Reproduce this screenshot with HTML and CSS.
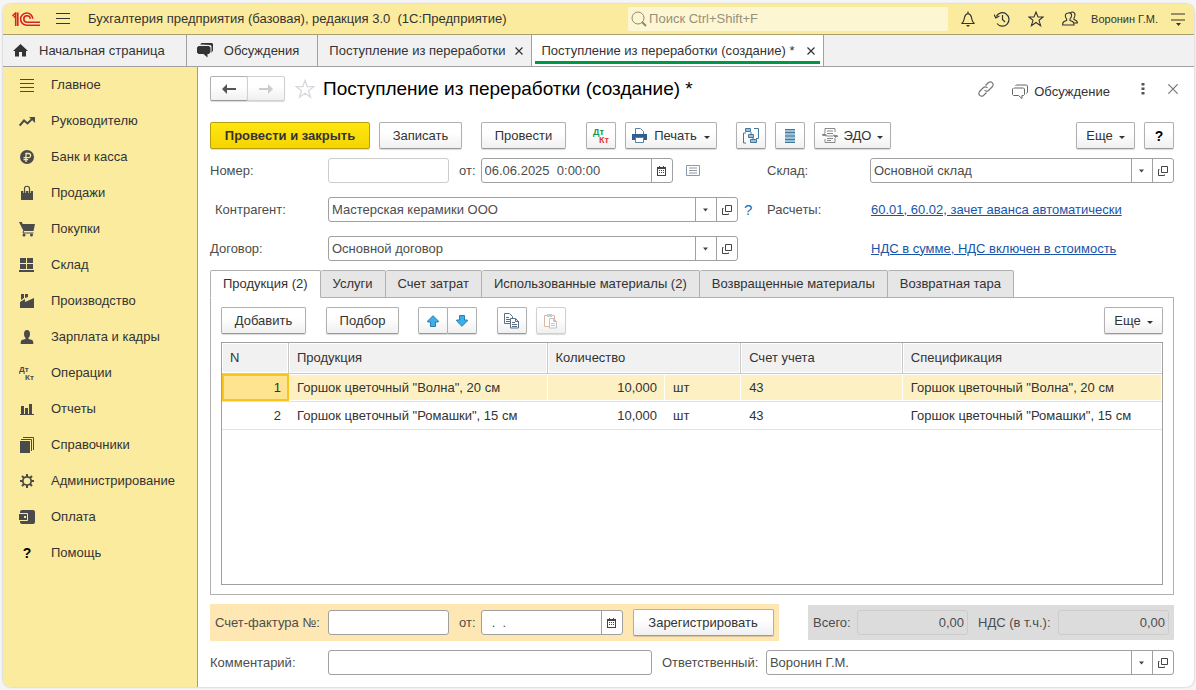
FILE: index.html
```html
<!DOCTYPE html>
<html lang="ru">
<head>
    <meta charset="UTF-8">
    <meta name="viewport" content="width=device-width, initial-scale=1.0">
    <title>Поступление из переработки (создание)</title>
    <link rel="stylesheet" href="styles.css">
</head>
<body>
    <!-- Shared icons -->
    <svg class="sprite" aria-hidden="true">
        <symbol id="i-close" viewBox="0 0 8 8"><path d="M.5.5l7 7M7.5.5l-7 7" fill="none" stroke="currentColor" stroke-width="1.2"/></symbol>
        <symbol id="i-caret" viewBox="0 0 6 3"><path d="M0 0h6L3 3z" fill="currentColor"/></symbol>
        <symbol id="i-open" viewBox="0 0 10 10"><path d="M3.5.5h6v6h-6zM1.5 3.5h-1v6h6v-1" fill="none" stroke="#444"/></symbol>
        <symbol id="i-calendar" viewBox="0 0 9 10"><path d="M0 1h2V0h1v1h3V0h1v1h2v9H0zM1 3v6h7V3z" fill="#444" fill-rule="evenodd"/><path d="M2 4h1v1H2zM4 4h1v1H4zM6 4h1v1H6zM2 6h1v1H2zM4 6h1v1H4zM6 6h1v1H6z" fill="#444"/></symbol>
    </svg>

    <div class="app">
        <!-- Title bar -->
        <header class="titlebar">
            <svg class="logo" width="28" height="15" viewBox="0 0 28 15" fill="none" stroke="#d8232a" stroke-width="1.6">
                <path d="M.4 4L3.700 1V14M1.800 5.400L3 4.300M5.800.6V14"/>
                <path d="M20.8 6.8A6.100 6.100 0 1 0 15 13.2H28M18.200 6.800A3.200 3.200 0 1 0 15 10.200H28"/>
            </svg>
            <button class="icon-btn menu-btn" aria-label="Меню"><svg width="14" height="12" viewBox="0 0 14 12"><path d="M0 .5h14M0 5.5h14M0 10.5h14" stroke="#333"/></svg></button>
            <span class="app-name">Бухгалтерия предприятия (базовая), редакция 3.0&nbsp; (1С:Предприятие)</span>
            <label class="search">
                <svg width="16" height="16" viewBox="0 0 16 16" fill="none" stroke="#8f8a6c"><circle cx="7" cy="7" r="6"/><path d="M11 11l4 4" stroke-width="2"/></svg>
                <input type="text" placeholder="Поиск Ctrl+Shift+F" aria-label="Поиск">
            </label>
            <div class="title-tools">
                <button class="icon-btn" aria-label="Уведомления"><svg width="16" height="16" viewBox="0 0 16 16" fill="none" stroke="#333" stroke-width="1.2"><path d="M1.5 12.5c2-1 2.5-3 3-6C5 4 6 3 8 2.5c2 .5 3 1.500 3.500 4 .5 3 1 5 3 6zM8 .5v2"/><path d="M6 14h4l-2 2z" fill="#333" stroke="none"/></svg></button>
                <button class="icon-btn" aria-label="История"><svg width="16" height="16" viewBox="0 0 16 16" fill="none" stroke="#333" stroke-width="1.2"><path d="M2.300 5.500A6.700 6.700 0 1 1 3 12.500M8.500 4v4.500l2.500 2.500"/><path d="M0 3.500l1.800 3.500L5.300 5" /></svg></button>
                <button class="icon-btn" aria-label="Избранное"><svg width="16" height="16" viewBox="0 0 16 16" fill="none" stroke="#333" stroke-width="1.1"><path d="M8 1l2 5h5.200L11 9.300l1.600 5.400L8 11.500l-4.600 3.200L5 9.300.8 6H6z"/></svg></button>
                <button class="icon-btn" aria-label="Пользователь"><svg width="16" height="16" viewBox="0 0 16 16" fill="none" stroke="#333" stroke-width="1.1"><path d="M6 2c4-1 4.500 3 2 6v1.500c3 1 4 1.500 4 4.500H.6c0-3 1-3.500 4-4.500V8C2.500 5 3 2.500 6 2zM8 2c3.500-2.500 6.500.5 4 5v1.500c2.500.8 3.400 1.500 3.400 3.500H12"/></svg></button>
                <a class="user" href="#">Воронин Г.М.</a>
                <button class="icon-btn" aria-label="Сервис"><svg width="14" height="13" viewBox="0 0 14 13"><path d="M0 1h14M0 7h14" stroke="#333" stroke-width="1.2"/><path d="M5 10h5l-2.500 3z" fill="#333"/></svg></button>
            </div>
        </header>

        <!-- Open windows -->
        <nav class="window-tabs">
            <a class="window-tab home" href="#"><svg class="tab-icon" width="15" height="13" viewBox="0 0 15 13"><path d="M7.500 0L15 7h-2v5.500H9V8H6v4.500H2V7H0z" fill="#333"/></svg>Начальная страница</a>
            <a class="window-tab talks" href="#"><svg class="tab-icon" width="16" height="15" viewBox="0 0 16 15"><path d="M3 1.500L4.500 0H15l1 1v6.500L14.500 10V3.500l-1-1.500z" fill="#333"/><path d="M1.500 3H12l1.500 1.500V9L12 11h-1.500v3.500L6.500 11h-5L0 9.500v-5z" fill="#333"/></svg>Обсуждения</a>
            <a class="window-tab closable" href="#">Поступление из переработки<svg width="8" height="8"><use href="#i-close"/></svg></a>
            <a class="window-tab closable active" href="#">Поступление из переработки (создание) *<svg width="8" height="8"><use href="#i-close"/></svg></a>
        </nav>

        <div class="workspace">
            <!-- Sections -->
            <nav class="sidebar">
                <a href="#"><svg width="16" height="16" viewBox="0 0 16 16"><path d="M1 2.500h14M1 6.500h14M1 10.500h14M1 14.500h14" stroke="#4a4a4a"/></svg>Главное</a>
                <a href="#"><svg width="16" height="16" viewBox="0 0 16 16"><path d="M.7 12.500L5 7.500l3.500 3 5-5" fill="none" stroke="#4a4a4a" stroke-width="2"/><path d="M10 4h6v6z" fill="#4a4a4a"/></svg>Руководителю</a>
                <a href="#"><svg width="16" height="16" viewBox="0 0 16 16"><circle cx="8" cy="8" r="7" fill="#4a4a4a"/><path d="M7 13V4.500h2.500a2 2 0 0 1 0 4.200H4.500M4.500 10.700H9" fill="none" stroke="#fbeb9e" stroke-width="1.300"/></svg>Банк и касса</a>
                <a href="#"><svg width="16" height="16" viewBox="0 0 16 16"><path d="M2 6h12v9H2z" fill="#4a4a4a"/><path d="M5.500 8V3.500C5.500 1 10.500 1 10.500 3.500V8" fill="none" stroke="#fbeb9e" stroke-width="2.400"/><path d="M5.500 8V3.500C5.500.5 10.500.5 10.500 3.500V8" fill="none" stroke="#4a4a4a" stroke-width="1.200"/></svg>Продажи</a>
                <a href="#"><svg width="16" height="16" viewBox="0 0 16 16"><path d="M0 1h3l.5 2H16l-1.500 7h-10z" fill="#4a4a4a"/><path d="M4.500 10l-.5 2h10.500" fill="none" stroke="#4a4a4a"/><circle cx="5" cy="14" r="1.500" fill="#4a4a4a"/><circle cx="12.500" cy="14" r="1.500" fill="#4a4a4a"/></svg>Покупки</a>
                <a href="#"><svg width="16" height="16" viewBox="0 0 16 16"><path d="M1 1h6v5H1zM8 1h6v5H8zM1 7h6v5H1zM8 7h6v5H8zM0 13h15v2H0z" fill="#4a4a4a"/></svg>Склад</a>
                <a href="#"><svg width="16" height="16" viewBox="0 0 16 16"><path d="M1 15V9l5-3v3l9-4v10zM2 1h3v4L2 7zM6 1h3v3L6 5z" fill="#4a4a4a"/></svg>Производство</a>
                <a href="#"><svg width="16" height="16" viewBox="0 0 16 16"><ellipse cx="8" cy="5" rx="3" ry="4" fill="#4a4a4a"/><path d="M6.500 8h3v2l3 .8c1.500.5 1.800 1.500 1.800 4.200H1.700c0-2.700.3-3.700 1.800-4.200l3-.8z" fill="#4a4a4a"/></svg>Зарплата и кадры</a>
                <a href="#"><svg class="dtkt" width="16" height="16" viewBox="0 0 16 16" fill="#4a4a4a"><text x="0" y="7">Дт</text><text x="6" y="15">Кт</text></svg>Операции</a>
                <a href="#"><svg width="16" height="16" viewBox="0 0 16 16"><path d="M2 5h3v8H2zM6 7h3v6H6zM10 3h3v10h-3zM1 13h14v1H1z" fill="#4a4a4a"/></svg>Отчеты</a>
                <a href="#"><svg width="16" height="16" viewBox="0 0 16 16"><path d="M1 4h10v12H1z" fill="#4a4a4a"/><path d="M2 2.500h10.500V14M4 .5h10.500V13" fill="none" stroke="#4a4a4a"/></svg>Справочники</a>
                <a href="#"><svg width="16" height="16" viewBox="0 0 16 16"><circle cx="8" cy="8" r="4.200" fill="none" stroke="#4a4a4a" stroke-width="1.800"/><path d="M8 1v3M8 12v3M1 8h3M12 8h3M3 3l2 2M11 11l2 2M13 3l-2 2M5 11l-2 2" stroke="#4a4a4a" stroke-width="2"/></svg>Администрирование</a>
                <a href="#"><svg width="16" height="16" viewBox="0 0 16 16"><rect x="1" y="1" width="15" height="14" rx="2" fill="#4a4a4a"/><path d="M0 4.500h8.500v7H0" fill="#4a4a4a" stroke="#fbeb9e"/><path d="M5 7h2v2H5z" fill="#fbeb9e"/></svg>Оплата</a>
                <a href="#"><span class="question">?</span>Помощь</a>
            </nav>

            <!-- Document form -->
            <main class="document">
                <div class="doc-head">
                    <div class="btn-group">
                        <button class="btn nav-btn" aria-label="Назад"><svg width="14" height="10" viewBox="0 0 14 10"><path d="M0 5l5-5v4h9v2H5v4z" fill="#555"/></svg></button>
                        <button class="btn nav-btn" aria-label="Вперед" disabled><svg width="14" height="10" viewBox="0 0 14 10"><path d="M14 5L9 0v4H0v2h9v4z" fill="#ccc"/></svg></button>
                    </div>
                    <button class="icon-btn" aria-label="В избранное"><svg width="20" height="20" viewBox="0 0 20 20"><path d="M10 1.500l2.200 6.200h6.600l-5.300 4 2 6.500L10 14.300l-5.500 3.900 2-6.500-5.300-4h6.600z" fill="none" stroke="#d5d8dc" stroke-width="1.300"/></svg></button>
                    <h1>Поступление из переработки (создание) *</h1>
                    <div class="head-tools">
                        <button class="icon-btn" aria-label="Ссылка"><svg width="16" height="16" viewBox="0 0 16 16" fill="none" stroke="#777" stroke-width="1.200"><path d="M7.500 4.500l3-3c2.500-2 6 1 4 4l-4 4c-1 1-3 1-4-.5M8.500 11.500l-3 3c-2.500 2-6-1-4-4l4-4c1-1 3-1 4 .5"/></svg></button>
                        <a class="talk" href="#"><svg width="16" height="15" viewBox="0 0 16 15" fill="none" stroke="#666"><path d="M2 4h9.500l1 1v5.500l-1 1H10v3l-3.500-3H1.500l-1-1V5l1-1M3.500 2l1-1h10l1 1v6l-1 1.500"/></svg>Обсуждение</a>
                        <button class="icon-btn more" aria-label="Еще"><svg width="4" height="12" viewBox="0 0 4 12" fill="#555"><path d="M.5 0h3v2.500h-3zM.5 4.500h3V7h-3zM.5 9h3v2.500h-3z"/></svg></button>
                        <button class="icon-btn" aria-label="Закрыть"><svg width="10" height="10" viewBox="0 0 10 10"><path d="M.3.3l9.400 9.400M9.700.3L.3 9.700" stroke="#777" stroke-width="1.200"/></svg></button>
                    </div>
                </div>

                <div class="toolbar">
                    <button class="btn primary">Провести и закрыть</button>
                    <button class="btn save">Записать</button>
                    <button class="btn post">Провести</button>
                    <button class="btn square entries" aria-label="Проводки"><svg class="dtkt" width="18" height="18" viewBox="0 0 18 18"><text x="1" y="8" fill="#0a9a4a">Дт</text><text x="7" y="16" fill="#d9373a">Кт</text></svg></button>
                    <button class="btn print"><svg width="15" height="15" viewBox="0 0 15 15"><path d="M3.500 6V.5h5l3 3V6" fill="#fff" stroke="#5a7da0"/><path d="M0 6h15v6H0z" fill="#2f5f8c"/><path d="M3.500 9.500h8v5h-8z" fill="#fff" stroke="#5a7da0"/></svg>Печать<svg width="6" height="3"><use href="#i-caret"/></svg></button>
                    <button class="btn square structure" aria-label="Структура"><svg width="16" height="16" viewBox="0 0 16 16" fill="#9cc0d8" stroke="#42789c"><path d="M3 5H.5v10H3M13 10.500h2.500V.5H11M8 4v2M10 9v2" fill="none"/><path d="M2.500.5h5v3h-5zM5.500 6.500h5v3h-5zM7.500 11.500h6v3h-6z"/></svg></button>
                    <button class="btn square" aria-label="Реестр"><svg width="10" height="14" viewBox="0 0 10 14"><path d="M0 0h10v14H0z" fill="#9cc0d8"/><path d="M0 .5h10M0 3.500h10M0 7h10M0 10.500h10M0 13.500h10" stroke="#42789c"/></svg></button>
                    <button class="btn edo"><svg width="16" height="15" viewBox="0 0 16 15" fill="none" stroke="#888"><path d="M3 5V.5h10V4M3 11v3.500h10V10M5 3h6M5 5.500h6M5 8h6M5 10.500h6M5 12.500h4"/><path d="M4 8.500v-2H0M0 6.500h4M12 6.500v2h4"/><path d="M0 8l2.500-3L5 8zM11 7l2.500 3L16 7z" fill="#888" stroke="none"/></svg>ЭДО<svg width="6" height="3"><use href="#i-caret"/></svg></button>
                    <button class="btn more-btn push">Еще<svg width="6" height="3"><use href="#i-caret"/></svg></button>
                    <button class="btn square help">?</button>
                </div>

                <div class="form">
                    <label for="number">Номер:</label>
                    <div class="line">
                        <input class="field number muted" id="number" type="text">
                        <label for="date">от:</label>
                        <div class="combo date">
                            <input id="date" type="text" value="06.06.2025  0:00:00">
                            <button aria-label="Календарь"><svg width="9" height="10"><use href="#i-calendar"/></svg></button>
                        </div>
                        <svg class="note" width="14" height="11" viewBox="0 0 14 11" fill="none" stroke="#8a98a8"><path d="M.5.5h13v10H.500zM3 3h8M3 5.500h8M3 8h8"/></svg>
                    </div>
                    <label for="store">Склад:</label>
                    <div class="combo">
                        <select id="store"><option>Основной склад</option></select>
                        <button aria-label="Открыть"><svg width="10" height="10"><use href="#i-open"/></svg></button>
                    </div>

                    <label class="indent" for="partner">Контрагент:</label>
                    <div class="line">
                        <div class="combo grow">
                            <select id="partner"><option>Мастерская керамики ООО</option></select>
                            <button aria-label="Открыть"><svg width="10" height="10"><use href="#i-open"/></svg></button>
                        </div>
                        <a class="hint" href="#">?</a>
                    </div>
                    <span>Расчеты:</span>
                    <a class="link" href="#">60.01, 60.02, зачет аванса автоматически</a>

                    <label for="contract">Договор:</label>
                    <div class="line">
                        <div class="combo grow">
                            <select id="contract"><option>Основной договор</option></select>
                            <button aria-label="Открыть"><svg width="10" height="10"><use href="#i-open"/></svg></button>
                        </div>
                        <span class="hint"></span>
                    </div>
                    <span></span>
                    <a class="link" href="#">НДС в сумме, НДС включен в стоимость</a>
                </div>

                <div class="tabs" role="tablist">
                    <button class="tab active" role="tab" aria-selected="true">Продукция (2)</button>
                    <button class="tab" role="tab">Услуги</button>
                    <button class="tab" role="tab">Счет затрат</button>
                    <button class="tab" role="tab">Использованные материалы (2)</button>
                    <button class="tab" role="tab">Возвращенные материалы</button>
                    <button class="tab" role="tab">Возвратная тара</button>
                </div>

                <section class="panel">
                    <div class="panel-toolbar">
                        <button class="btn add">Добавить</button>
                        <button class="btn pick">Подбор</button>
                        <div class="btn-group">
                            <button class="btn square" aria-label="Вверх"><svg width="12" height="12" viewBox="0 0 12 12"><path d="M6 .7l5.300 5.300v1H8.500v4.500h-5V7H.7V6z" fill="#3daee9" stroke="#2a7fb0"/></svg></button>
                            <button class="btn square" aria-label="Вниз"><svg width="12" height="12" viewBox="0 0 12 12"><path d="M6 11.300L.7 6V5h2.800V.5h5V5h2.800v1z" fill="#3daee9" stroke="#2a7fb0"/></svg></button>
                        </div>
                        <button class="btn square copy" aria-label="Копировать"><svg width="16" height="16" viewBox="0 0 16 16" fill="#fff" stroke="#5b6f84"><path d="M.5.5h5l3 3v7h-8zM2 4.500h3M2 6.500h4M2 8.500h4"/><path d="M6.500 5.500h5l3 3v6.500h-8zM11.500 5.500v3h3M8 9.500h3M8 11.500h5M8 13.500h5"/></svg></button>
                        <button class="btn square paste" aria-label="Вставить" disabled><svg width="16" height="16" viewBox="0 0 16 16" fill="#fff"><path d="M1.500 2.500h10v11h-10z" stroke="#dcb8a4"/><path d="M4 1h5v3H4z" fill="#ccc"/><path d="M6.500 5.500h4l3 3v6.500h-7zM10.500 5.500v3h3M8 10.500h4M8 12.500h4" stroke="#bcc3ca"/></svg></button>
                        <button class="btn more-btn push">Еще<svg width="6" height="3"><use href="#i-caret"/></svg></button>
                    </div>
                    <div class="grid-box">
                        <table>
                            <colgroup>
                                <col class="c-num"><col class="c-product"><col class="c-qty"><col class="c-unit"><col class="c-account"><col>
                            </colgroup>
                            <thead>
                                <tr><th>N</th><th>Продукция</th><th colspan="2">Количество</th><th>Счет учета</th><th>Спецификация</th></tr>
                            </thead>
                            <tbody>
                                <tr class="selected"><td class="num current">1</td><td>Горшок цветочный "Волна", 20 см</td><td class="num">10,000</td><td>шт</td><td>43</td><td>Горшок цветочный "Волна", 20 см</td></tr>
                                <tr><td class="num">2</td><td>Горшок цветочный "Ромашки", 15 см</td><td class="num">10,000</td><td>шт</td><td>43</td><td>Горшок цветочный "Ромашки", 15 см</td></tr>
                            </tbody>
                        </table>
                    </div>
                </section>

                <div class="summary">
                    <div class="invoice">
                        <label class="invoice-label" for="invoice">Счет-фактура №:</label>
                        <input class="field number" id="invoice" type="text">
                        <label for="invoice-date">от:</label>
                        <div class="combo invoice-date">
                            <input id="invoice-date" type="text" value="  .  .">
                            <button aria-label="Календарь"><svg width="9" height="10"><use href="#i-calendar"/></svg></button>
                        </div>
                        <button class="btn register">Зарегистрировать</button>
                    </div>
                    <div class="totals">
                        <label for="total">Всего:</label>
                        <input class="field total" id="total" type="text" value="0,00" readonly>
                        <label class="vat-label" for="vat">НДС (в т.ч.):</label>
                        <input class="field total" id="vat" type="text" value="0,00" readonly>
                    </div>
                </div>

                <div class="comment-row">
                    <label class="comment-label" for="comment">Комментарий:</label>
                    <input class="field comment" id="comment" type="text">
                    <label class="owner-label" for="owner">Ответственный:</label>
                    <div class="combo owner">
                        <select id="owner"><option>Воронин Г.М.</option></select>
                        <button aria-label="Открыть"><svg width="10" height="10"><use href="#i-open"/></svg></button>
                    </div>
                </div>
            </main>
        </div>
    </div>
</body>
</html>
```
FILE: styles.css
```css
:root {
    --yellow: #fbeb9e;
    --line: #a0a0a0;
    --text: #333;
    --label: #4d4d4d;
}

* {
    box-sizing: border-box;
}

body {
    margin: 0;
    min-height: 100vh;
    padding: 4px 2px 3px 3px;
    display: flex;
    background-color: #f5f5f6;
    color: var(--text);
    font-family: "Liberation Sans", Arial, sans-serif;
    font-size: 13px;
    line-height: 16px;
}

button, input, select {
    font: inherit;
    color: inherit;
    margin: 0;
}

a {
    color: inherit;
    text-decoration: none;
}

svg {
    flex-shrink: 0;
}

.sprite {
    display: none;
}

.app {
    flex: 1;
    min-width: 0;
    display: flex;
    flex-direction: column;
    background-color: white;
    border-radius: 8px;
    overflow: hidden;
    box-shadow: 0 0 2px rgba(0, 0, 0, 0.3);
}

.icon-btn {
    display: flex;
    padding: 0;
    border: none;
    background: none;
}

/* Title bar */
.titlebar {
    height: 31px;
    padding: 0 9px;
    display: flex;
    align-items: center;
    background-color: var(--yellow);
    border-bottom: 1px solid #a9a072;
}

.menu-btn {
    margin: 0 18px 0 16px;
}

.app-name {
    white-space: nowrap;
}

.search {
    width: 320px;
    height: 24px;
    margin-left: auto;
    padding-left: 3px;
    display: flex;
    align-items: center;
    gap: 2px;
    background-color: #fdf6d3;
    border-radius: 2px;
}

.search input {
    flex: 1;
    min-width: 0;
    padding: 0;
    border: none;
    outline: none;
    background: none;
}

.search input::placeholder {
    color: #96917a;
}

.title-tools {
    margin-left: 12px;
    display: flex;
    align-items: center;
    gap: 18px;
}

.user {
    margin: 0 -5px;
    font-size: 11px;
}

/* Open windows */
.window-tabs {
    height: 32px;
    display: flex;
    background-color: #f1f1f1;
    border-bottom: 1px solid var(--line);
}

.window-tab {
    padding: 0 18px 0 10px;
    display: flex;
    align-items: center;
    white-space: nowrap;
    border-right: 1px solid var(--line);
}

.window-tab.home {
    padding-right: 21px;
}

.tab-icon {
    margin-right: 11px;
}

.window-tab.closable {
    padding: 0 8px 0 11px;
    gap: 9px;
}

.window-tab.active {
    padding: 0 8px 0 10px;
    gap: 13px;
    background: linear-gradient(#009846, #009846) center bottom 2px / calc(100% - 6px) 3px no-repeat white;
}

/* Sections */
.workspace {
    flex: 1;
    display: flex;
}

.sidebar {
    width: 195px;
    flex-shrink: 0;
    background-color: var(--yellow);
    border-right: 1px solid #a9a072;
}

.sidebar a {
    height: 36px;
    padding-left: 16px;
    display: flex;
    align-items: center;
    gap: 16px;
}

.question {
    width: 16px;
    text-align: center;
    font-size: 14px;
    font-weight: bold;
    color: black;
}

.dtkt {
    font-size: 8px;
    font-weight: bold;
}

.entries .dtkt {
    font-size: 9px;
}

/* Buttons */
.btn {
    height: 27px;
    padding: 0 12px;
    display: flex;
    align-items: center;
    justify-content: center;
    white-space: nowrap;
    background: linear-gradient(#fff 40%, #f0f0f0);
    border: 1px solid #b0b0b0;
    border-bottom-color: #999;
    border-radius: 2px;
    box-shadow: 0 1px 1px rgba(0, 0, 0, 0.15);
}

.btn:disabled {
    border-color: #d0d0d0;
}

.btn.square {
    width: 30px;
    padding: 0;
}

.btn.primary {
    width: 160px;
    background: linear-gradient(#ffe712, #f5d400);
    border-color: #b59f0c;
    font-weight: bold;
}

.btn-group {
    display: flex;
}

.btn-group .btn + .btn {
    margin-left: -1px;
}

.push {
    margin-left: auto;
}

/* Document */
.document {
    flex: 1;
    min-width: 0;
    padding: 9px 20px 12px 12px;
    display: flex;
    flex-direction: column;
}

.doc-head {
    height: 25px;
    display: flex;
    align-items: center;
}

.doc-head .btn-group {
    margin-right: 10px;
}

.nav-btn {
    width: 38px;
    height: 25px;
}

h1 {
    margin: 0 0 0 8px;
    font-size: 19px;
    font-weight: normal;
    line-height: 24px;
    color: black;
    white-space: nowrap;
}

.head-tools {
    margin-left: auto;
    display: flex;
    align-items: center;
}

.talk {
    margin: 6px 31px 0 18px;
    display: flex;
    align-items: center;
    gap: 6px;
}

.more {
    margin-right: 23px;
}

.head-tools .icon-btn:last-child {
    margin-right: -4px;
}

.toolbar {
    margin-top: 21px;
    display: flex;
    gap: 9px;
}

.save {
    width: 83px;
}

.post {
    width: 85px;
    margin-left: 10px;
}

.entries {
    margin-left: 11px;
}

.print {
    width: 92px;
    gap: 7px;
    padding: 0;
}

.structure {
    margin: 0 0 0 10px;
}

.edo {
    width: 77px;
    gap: 6px;
    padding: 0;
}

.more-btn {
    width: 59px;
    padding: 0;
    gap: 6px;
}

.btn svg[height="3"] {
    margin-top: 3px;
}

.help {
    font-size: 14px;
    font-weight: bold;
    color: black;
}

/* Fields */
.form {
    margin-top: 9px;
    display: grid;
    grid-template-columns: 118px 1fr 103px 304px;
    grid-auto-rows: 25px;
    row-gap: 14px;
    align-items: center;
    color: var(--label);
}

.indent {
    padding-left: 5px;
}

.line {
    display: flex;
    align-items: center;
}

.field,
.combo {
    height: 25px;
    background-color: white;
    border: 1px solid var(--line);
    border-radius: 3px;
}

.field {
    min-width: 0;
    padding: 0 3px;
}

.field.muted {
    border-color: #ccc;
}

.combo {
    display: flex;
    overflow: hidden;
}

.combo input,
.combo select {
    flex: 1;
    min-width: 0;
    padding: 0 3px;
    border: none;
    outline: none;
    background: none;
    white-space: pre;
}

.combo select {
    appearance: none;
    background: url("data:image/svg+xml,%3Csvg xmlns='http://www.w3.org/2000/svg' width='21' height='23'%3E%3Cpath d='M.5 0v23' stroke='%23a0a0a0'/%3E%3Cpath d='M8 10.500h5l-2.500 3z' fill='%23444'/%3E%3C/svg%3E") right center no-repeat;
}

.combo button {
    width: 21px;
    padding: 0;
    display: flex;
    align-items: center;
    justify-content: center;
    background: none;
    border: none;
    border-left: 1px solid var(--line);
}

.number {
    width: 121px;
    margin-right: 10px;
}

.date {
    width: 192px;
    margin-left: 5px;
}

.note {
    margin-left: 13px;
}

.grow {
    flex: 1;
}

.hint {
    width: 29px;
    padding-left: 6px;
    font-size: 15px;
    color: #0a76b8;
}

.link {
    padding-left: 1px;
    color: #1a54a8;
    text-decoration: underline;
    white-space: nowrap;
}

/* Tabs */
.tabs {
    z-index: 1;
    margin-top: 9px;
    display: flex;
}

.tab {
    height: 28px;
    padding: 0 12px;
    background-color: #e6e6e6;
    border: 1px solid #b0b0b0;
    border-left: none;
    border-radius: 2px 2px 0 0;
    white-space: nowrap;
}

/* the active tab covers the top border of the panel */
.tab.active {
    border-left: 1px solid #b0b0b0;
    border-bottom-color: white;
    background-color: white;
}

.panel {
    flex: 1;
    margin-top: -1px;
    padding: 9px 10px;
    display: flex;
    flex-direction: column;
    border: 1px solid #b0b0b0;
}

.panel-toolbar {
    display: flex;
}

.add {
    width: 85px;
    margin-right: 20px;
}

.pick {
    width: 73px;
    margin-right: 19px;
}

.copy {
    margin: 0 9px 0 20px;
}

.grid-box {
    flex: 1;
    margin-top: 8px;
    border: 1px solid var(--line);
}

table {
    width: 100%;
    table-layout: fixed;
    border-collapse: separate;
    border-spacing: 0;
}

.c-num { width: 67px; }
.c-product { width: 27.5%; }
.c-qty { width: 12.5%; }
.c-unit { width: 8.1%; }
.c-account { width: 17.2%; }

th {
    height: 31px;
    padding: 0 8px;
    text-align: left;
    font-weight: normal;
    background-color: #f1f1f1;
    border-right: 1px solid #c8c8c8;
    border-bottom: 1px solid #c8c8c8;
    box-shadow: inset 0 0 0 1px white;
}

td {
    height: 28px;
    padding: 0 8px;
    white-space: nowrap;
    border-bottom: 1px solid #e3e3e3;
}

th:last-child {
    border-right: none;
}

td.num {
    text-align: right;
}

.selected td {
    background-color: #fdf1c4;
    box-shadow: inset -1px 0 0 white, inset 0 1px 0 white, inset 0 -1px 0 white;
}

.selected .current {
    background-color: #fee391;
    box-shadow: inset 0 0 0 2px #f9c51d;
}

/* Bottom rows */
.summary {
    margin-top: 9px;
    display: flex;
    align-items: center;
    justify-content: space-between;
    color: var(--label);
}

.invoice {
    height: 37px;
    padding: 0 5px;
    display: flex;
    align-items: center;
    background-color: #fee7b3;
}

.invoice-label {
    width: 113px;
    white-space: nowrap;
}

.invoice-date {
    width: 142px;
    margin: 0 10px 0 5px;
}

.register {
    width: 141px;
    color: var(--text);
}

.totals {
    height: 35px;
    padding: 0 5px;
    display: flex;
    align-items: center;
    background-color: #dcdcdc;
}

.totals label {
    width: 44px;
}

.totals .vat-label {
    width: 80px;
    margin-left: 10px;
    white-space: nowrap;
}

.total {
    width: 111px;
    text-align: right;
    background-color: #dcdcdc;
    border-color: #ccc;
}

.comment-row {
    margin-top: 9px;
    display: flex;
    align-items: center;
    color: var(--label);
}

.comment-label {
    width: 118px;
}

.comment {
    flex: 7;
}

.owner-label {
    width: 104px;
    margin-left: 10px;
}

.owner {
    flex: 9;
}
```
